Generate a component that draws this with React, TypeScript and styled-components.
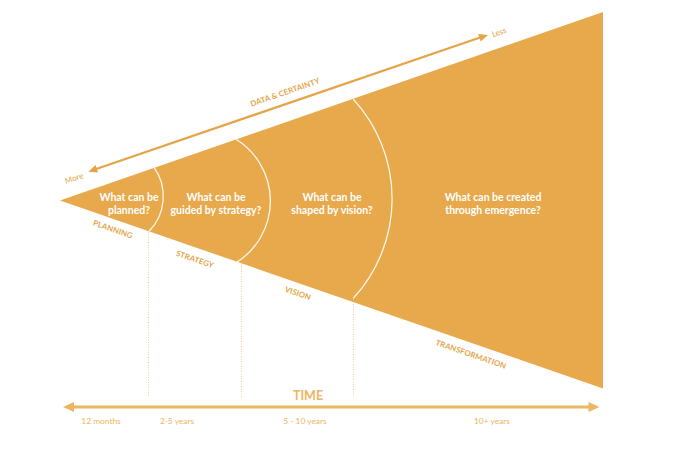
import React from "react";
import styled, { createGlobalStyle } from "styled-components";

// colours picked from the reference
const CONE = "#E7A94B";
const INK = "#E4A447";
const SOFT = "#ECB662";
const SLOPE = 19.1;

const GlobalStyle = createGlobalStyle`
  html, body {
    margin: 0;
    padding: 0;
    background: #fff;
  }
  body {
    font-family: Lato, "Open Sans", "Liberation Sans", sans-serif;
  }
`;

const Canvas = styled.div`
  width: 680px;
  height: 454px;
  display: flex;
  flex-direction: column;
  overflow: hidden;
  background: #fff;
`;

const DiagramArea = styled.div`
  position: relative;
  flex: none;
  height: 386px;
`;

const Drawing = styled.svg`
  position: absolute;
  inset: 0;
  width: 680px;
  height: 386px;
  overflow: visible;
`;

interface PlacedProps {
  $x: number;
  $y: number;
  $angle?: number;
}

// a label pinned on the diagram
const Placed = styled.span<PlacedProps>`
  position: absolute;
  left: ${({ $x }) => $x}px;
  top: ${({ $y }) => $y}px;
  transform: translate(-50%, -50%) rotate(${({ $angle = 0 }) => $angle}deg);
  white-space: nowrap;
`;

const Question = styled(Placed)`
  color: #fff;
  font-size: 10.5px;
  font-weight: 700;
  line-height: 13.4px;
  text-align: center;
`;

const EdgeLabel = styled(Placed)`
  color: ${INK};
  font-size: 7.8px;
  font-weight: 700;
  letter-spacing: 0.1px;
`;

const Hint = styled(Placed)`
  color: ${INK};
  font-size: 8px;
  font-weight: 400;
`;

const TimeAxis = styled.div`
  display: flex;
  flex-direction: column;
  width: 537px;
  padding-left: 63px;
`;

const TimeTitle = styled.div`
  width: 490px;
  margin-top: 3.5px;
  color: ${SOFT};
  font-size: 12.5px;
  font-weight: 700;
  line-height: 12px;
  text-align: center;
`;

const AxisArrow = styled.svg`
  display: block;
  width: 537px;
  height: 10px;
`;

const YearsRow = styled.div`
  display: grid;
  grid-template-columns: 76px 76px 180px 194px;
  margin-top: 4.5px;
`;

const YearLabel = styled.span`
  color: ${SOFT};
  font-size: 8.4px;
  line-height: 11px;
  text-align: center;
  white-space: nowrap;
`;

const questions = [
  { x: 129, y: 204, lines: ["What can be", "planned?"] },
  { x: 216, y: 204, lines: ["What can be", "guided by strategy?"] },
  { x: 332, y: 204, lines: ["What can be", "shaped by vision?"] },
  { x: 493, y: 204, lines: ["What can be created", "through emergence?"] },
];

const stages = [
  { x: 113, y: 229, text: "PLANNING" },
  { x: 195, y: 258.5, text: "STRATEGY" },
  { x: 298, y: 293, text: "VISION" },
  { x: 470.5, y: 353.5, text: "TRANSFORMATION" },
];

const years = ["12 months", "2-5 years", "5 - 10 years", "10+ years"];

const arcs = [
  "M154 167.3 A50 50 0 0 1 149.3 231",
  "M236 139.3 A72.6 72.6 0 0 1 236.7 262.3",
  "M353.3 99.3 A147 147 0 0 1 353.3 298.3",
];

const guides = [
  { x: 148.5, from: 232, to: 397 },
  { x: 241.5, from: 263.5, to: 399 },
  { x: 353.5, from: 299, to: 397 },
];

const CertaintyArrow = () => {
  // runs parallel to the top edge of the cone
  const length = 422.4;
  return (
    <g transform="translate(88.3 171.7) rotate(-18.9)">
      <line x1={6} y1={0} x2={length - 6} y2={0} stroke={INK} strokeWidth={2.2} />
      <polygon points="0,0 9,-4 9,4" fill={INK} />
      <polygon points={`${length},0 ${length - 9},-4 ${length - 9},4`} fill={INK} />
    </g>
  );
};

export default function App() {
  return (
    <>
      <GlobalStyle />
      <Canvas>
        <DiagramArea>
          <Drawing viewBox="0 0 680 386">
            <polygon points="60,200.5 603,12 603,388.5" fill={CONE} />
            {arcs.map((d) => (
              <path key={d} d={d} fill="none" stroke="#FFF7EA" strokeWidth={1.3} />
            ))}
            {guides.map((g) => (
              <line
                key={g.x}
                x1={g.x}
                y1={g.from}
                x2={g.x}
                y2={g.to}
                stroke="#F0CC9A"
                strokeWidth={1}
                strokeDasharray="1 1.5"
              />
            ))}
            <CertaintyArrow />
          </Drawing>

          <Hint $x={73.7} $y={177.5} $angle={-SLOPE}>
            More
          </Hint>
          <Hint $x={498.7} $y={31.7} $angle={-SLOPE}>
            Less
          </Hint>
          <EdgeLabel $x={284.7} $y={92.3} $angle={-SLOPE}>
            DATA &amp; CERTAINTY
          </EdgeLabel>

          {questions.map((q) => (
            <Question key={q.lines[1]} $x={q.x} $y={q.y}>
              {q.lines[0]}
              <br />
              {q.lines[1]}
            </Question>
          ))}

          {stages.map((s) => (
            <EdgeLabel key={s.text} $x={s.x} $y={s.y} $angle={SLOPE}>
              {s.text}
            </EdgeLabel>
          ))}
        </DiagramArea>

        <TimeAxis>
          <TimeTitle>TIME</TimeTitle>
          <AxisArrow viewBox="0 0 537 10">
            <line x1={7} y1={5} x2={530} y2={5} stroke={SOFT} strokeWidth={3} />
            <polygon points="0,5 11,0 11,10" fill={SOFT} />
            <polygon points="536.5,5 525.5,0 525.5,10" fill={SOFT} />
          </AxisArrow>
          <YearsRow>
            {years.map((y) => (
              <YearLabel key={y}>{y}</YearLabel>
            ))}
          </YearsRow>
        </TimeAxis>
      </Canvas>
    </>
  );
}
